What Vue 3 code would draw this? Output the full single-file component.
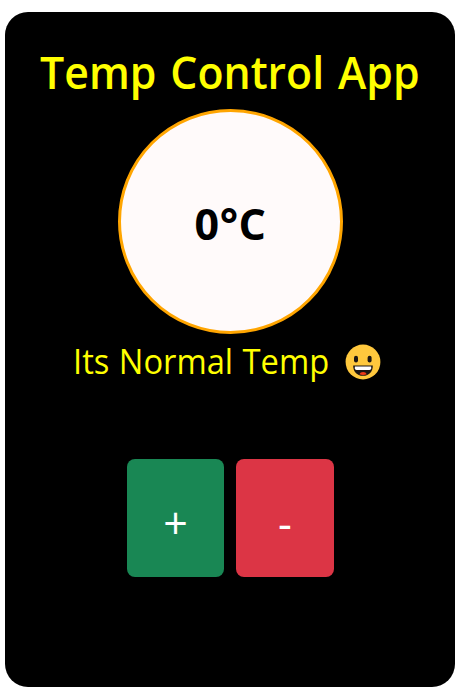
<script setup>
import { computed, ref } from 'vue'

const temp = ref(0)
const message = computed(() => {
  if (temp.value > 20) return 'Its Hot Temp'
  if (temp.value < -20) return 'Its Cold Temp'
  return 'Its Normal Temp'
})
</script>

<template>
  <main class="card">
    <h1 class="title">Temp Control App</h1>
    <div class="dial"><span class="value">{{ temp }}°C</span></div>
    <p class="status">
      <span class="message">{{ message }}</span>
      <svg class="face" viewBox="0 0 36 36" aria-hidden="true">
        <circle cx="18" cy="18" r="17.4" fill="#ffc83d" />
        <rect x="9" y="11.8" width="4" height="6.6" rx="2" fill="#1b1512" />
        <rect x="22.6" y="11.8" width="4" height="6.6" rx="2" fill="#1b1512" />
        <path d="M8.2 21.4H27.8C28 27 24.4 31.8 18 31.8S8 27 8.2 21.4Z" fill="#1b1512" />
        <path d="M9.8 22.5H26.2V24.2Q26.2 25.9 24.5 25.9H11.5Q9.8 25.9 9.8 24.2Z" fill="#fff" />
        <path d="M14.4 30.2Q15.3 28.1 18.1 28.1T21.8 30.2Q18.1 31.6 14.4 30.2Z" fill="#f03a17" />
      </svg>
    </p>
    <div class="controls">
      <button class="btn increase" type="button" @click="temp++"><span>+</span></button>
      <button class="btn decrease" type="button" @click="temp--"><span>-</span></button>
    </div>
  </main>
</template>

<style>
body {
  background: #fff;
}
</style>

<style scoped>
.card {
  box-sizing: border-box;
  width: 450px;
  height: 675px;
  margin: 12px 5px 4px;
  padding-top: 29px;
  border-radius: 23px;
  background: #000;
  color: #ff0;
  display: flex;
  flex-direction: column;
  align-items: center;
  overflow: hidden;
  font-family: "Segoe UI", "Open Sans", "Noto Sans", sans-serif;
}
.title {
  margin: 0;
  height: 68px;
  line-height: 60px;
  font-size: 45.5px;
  font-weight: 600;
  word-spacing: 3px;
  transform: scaleX(0.94);
  white-space: nowrap;
}
.dial {
  box-sizing: border-box;
  width: 225px;
  height: 225px;
  border: 3px solid #ffa500;
  border-radius: 50%;
  background: #fffafa;
  color: #000;
  display: flex;
  align-items: center;
  justify-content: center;
}
.value {
  padding: 5px 0 0 1px;
  font-size: 43px;
  font-weight: 700;
  letter-spacing: 0.5px;
  line-height: 60px;
}
.status {
  margin: 0;
  height: 56px;
  width: 310px;
  display: flex;
  align-items: center;
  font-size: 35px;
  white-space: nowrap;
}
.message {
  width: 270px;
  margin-left: -2px;
  padding-bottom: 3px;
  word-spacing: 1px;
  transform: scaleX(0.934);
  transform-origin: left;
}
.face {
  width: 36px;
  height: 36px;
  margin-left: auto;
  margin-right: 4px;
  flex: none;
}
.controls {
  display: flex;
  gap: 12px;
  margin-top: 69px;
}
.btn {
  height: 118px;
  padding: 10px 0 0 1px;
  border: 0;
  border-radius: 8px;
  color: #fff;
  font-family: inherit;
  font-size: 43px;
  line-height: 60px;
}
.increase {
  width: 97px;
  background: #198754;
}
.decrease {
  width: 98px;
  background: #dc3545;
}
</style>
